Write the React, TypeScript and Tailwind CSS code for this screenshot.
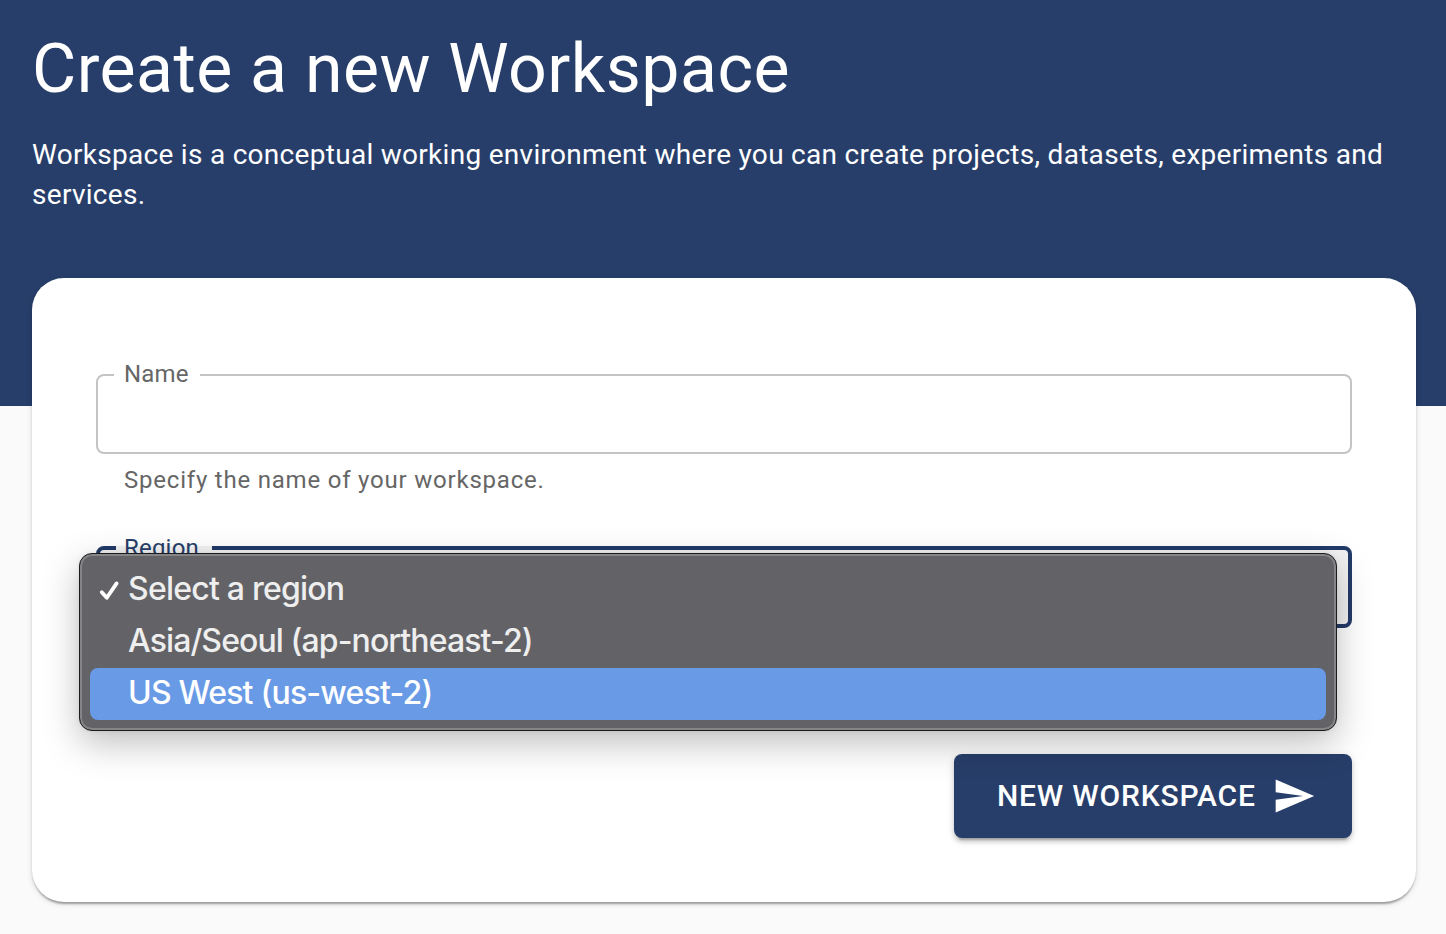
const regions = [
  { label: 'Select a region', spacing: 'tracking-[-0.78px]' },
  { label: 'Asia/Seoul (ap-northeast-2)', spacing: 'tracking-[-0.9px]' },
  { label: 'US West (us-west-2)', spacing: 'tracking-[-0.8px]' },
];

function RegionMenu() {
  return (
    <ul
      role="listbox"
      className="absolute top-[7px] -left-[17px] h-[178px] w-[1258px] rounded-[13px] border border-[#1c1c1e] bg-[#636367] px-[10px] pt-[10px] font-['Inter',sans-serif] shadow-[inset_0_0_0_2px_#858588,0_12px_36px_rgba(0,0,0,0.26),0_0_4px_rgba(0,0,0,0.08)]"
    >
      {regions.map((region, i) => (
        <li
          key={region.label}
          role="option"
          aria-selected={i === 0}
          className={
            i === 2
              ? 'flex h-[52px] items-center rounded-lg bg-[#689ae6] pl-[8px] text-white'
              : 'flex h-[52px] items-center rounded-lg pl-[8px] text-[#eeeeef]'
          }
        >
          <span className="flex w-[30px] shrink-0">
            {i === 0 && (
              <svg width="22" height="22" viewBox="0 0 22 22" fill="none" stroke="#fff" strokeWidth="3.8" strokeLinecap="round" strokeLinejoin="round" className="mt-[2px]">
                <path d="M3.8 12.2 8.8 17.8 18.6 3.4" />
              </svg>
            )}
          </span>
          <span className={`pb-[2px] text-[32px] leading-[50px] font-[450] whitespace-nowrap ${region.spacing}`}>{region.label}</span>
        </li>
      ))}
    </ul>
  );
}

export default function App() {
  return (
    <div className="h-[934px] w-[1446px] overflow-hidden bg-[#fafafa] font-['Roboto',sans-serif]">
      <header className="h-[406px] bg-[#273e6a] px-8 pt-[27px] text-white">
        <h1 className="text-[68px] leading-[84px] tracking-[0.46px] whitespace-nowrap">Create a new Workspace</h1>
        <p className="mt-6 text-[28px] leading-10 tracking-[0.29px]">
          Workspace is a conceptual working environment where you can create projects, datasets, experiments and services.
        </p>
      </header>
      <main className="relative mx-8 -mt-32 flex h-[624px] w-[1384px] flex-col rounded-[32px] bg-white px-16 pt-[85px] shadow-[0_4px_2px_-2px_rgba(0,0,0,0.2),0_2px_2px_rgba(0,0,0,0.14),0_2px_6px_rgba(0,0,0,0.12)]">
        <fieldset className="h-[91px] w-[1256px] rounded-lg border-2 border-[#c4c4c4] px-4">
          <legend className="h-6 w-[86px] pl-[10px] text-[24px] leading-[22px] tracking-[0.2px] text-[#666]">Name</legend>
          <input aria-label="Name" className="w-full outline-none" />
        </fieldset>
        <p className="mt-[6px] pl-7 text-[24px] leading-10 tracking-[0.79px] text-[#666]">Specify the name of your workspace.</p>
        <div className="relative mt-[36px] h-[92px] w-[1256px]">
          <fieldset className="h-[92px] w-[1256px] rounded-lg border-4 border-[#233a68] bg-black/5 px-4">
            <legend className="h-6 w-[96px] pl-2 text-[24px] leading-[24px] tracking-[0.2px] text-[#273e6a]">Region</legend>
          </fieldset>
          <div className="absolute top-[10px] left-0">
            <RegionMenu />
          </div>
        </div>
        <button className="mt-[126px] flex h-[84px] w-[398px] items-center self-end rounded-lg bg-[#273e6a] pl-[43px] text-left text-[30px] font-medium tracking-[0.8px] text-white shadow-[0_6px_2px_-4px_rgba(0,0,0,0.2),0_4px_4px_rgba(0,0,0,0.14),0_2px_10px_rgba(0,0,0,0.12)]">
          <span className="w-[275px] pb-[2px] whitespace-nowrap">NEW WORKSPACE</span>
          <svg width="44" height="44" viewBox="0 0 24 24" fill="currentColor">
            <path d="M2.01 21 23 12 2.01 3 2 10l15 2-15 2z" />
          </svg>
        </button>
      </main>
    </div>
  );
}
